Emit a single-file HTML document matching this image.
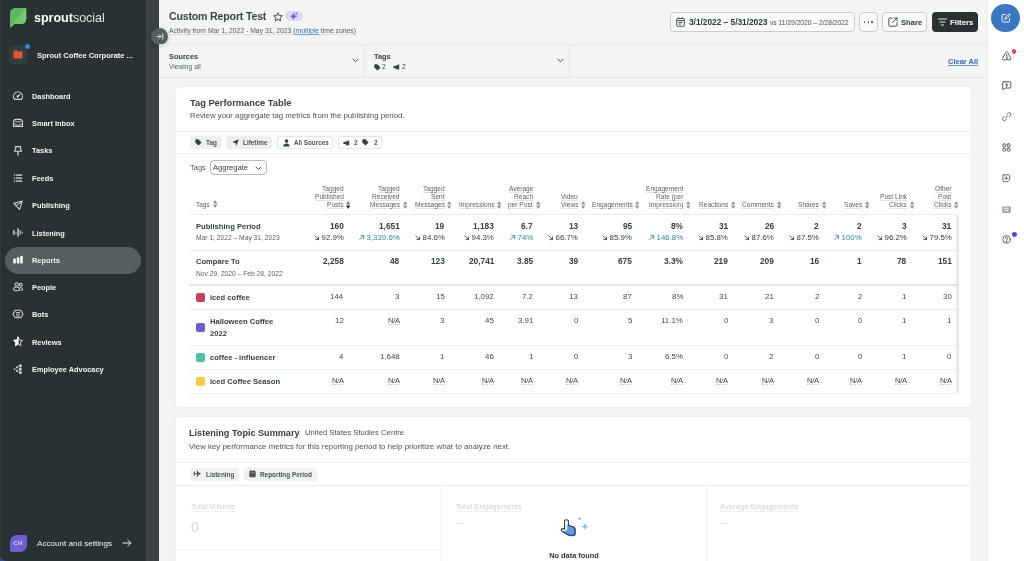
<!DOCTYPE html><html><head><meta charset="utf-8"><style>
html,body{margin:0;padding:0;}
body{width:1024px;height:561px;overflow:hidden;position:relative;background:#f3f4f4;font-family:"Liberation Sans",sans-serif;}
.t{position:absolute;white-space:nowrap;will-change:transform;}
svg{position:absolute;overflow:visible;}
</style></head><body><div style="position:absolute;left:988.3px;top:0px;width:35.7px;height:561px;background:#ffffff;box-shadow:-1px 0 2px rgba(0,0,0,0.035);"></div><div style="position:absolute;left:0px;top:0px;width:159px;height:561px;background:#394143;"></div><div style="position:absolute;left:0px;top:548px;width:12px;height:13px;background:#2b4f86;"></div><div style="position:absolute;left:0px;top:0px;width:146px;height:560.5px;background:#2a3133;border-bottom-left-radius:7px;box-shadow:inset 1px 0 0 #333a3c;"></div><svg style="left:10px;top:8px" width="17" height="20" viewBox="0 0 17 20">
<path d="M5.5 0 H16.2 V10.8 C16.2 13.8 14.2 15.9 11.2 15.9 H4.4 L0 19.8 V5.5 C0 2.3 2.3 0 5.5 0Z" fill="#5cb85f"/>
<path d="M16.2 0 V10.8 C16.2 13.8 14.2 15.9 11.2 15.9 H4.4 L0 19.8 Z" fill="#79cf6f"/>
<path d="M16.2 8 V10.8 C16.2 13.8 14.2 15.9 11.2 15.9 H4.4 L0 19.8 L7.8 8Z" fill="#6ec868" opacity="0.7"/>
</svg><div class="t" style="left:34.30px;top:10.99px;font-size:12.6px;line-height:14.49px;font-weight:400;color:#dfe3e3;letter-spacing:-0.05px;"><b style="color:#ffffff">sprout</b>social</div><div style="position:absolute;left:0px;top:40px;width:146px;height:1px;background:#2c3335;"></div><div style="position:absolute;left:9px;top:46px;width:18px;height:18px;background:#343c3e;border-radius:4px;"></div><svg style="left:13px;top:50px" width="10" height="9" viewBox="0 0 10 9"><path d="M0.5 1.2 C0.5 0.8 0.8 0.5 1.2 0.5 H3.8 L4.8 1.6 H8.8 C9.2 1.6 9.5 1.9 9.5 2.3 V8 C9.5 8.3 9.2 8.5 8.8 8.5 H1.2 C0.8 8.5 0.5 8.3 0.5 8Z" fill="#e0533f"/></svg><div style="position:absolute;left:24.5px;top:43.5px;width:5px;height:5px;background:#3b82dd;border-radius:50%;box-shadow:0 0 0 1px #2a3133;"></div><div class="t" style="left:37.00px;top:52.14px;font-size:7.5px;line-height:8.62px;font-weight:700;color:#f2f4f4;">Sprout Coffee Corporate ...</div><div style="position:absolute;left:4.5px;top:246.5px;width:136.5px;height:27px;background:#575e60;border-radius:14px;"></div><div class="t" style="left:31.75px;top:92.63px;font-size:7.4px;line-height:8.51px;font-weight:700;color:#f2f4f4;">Dashboard</div><div class="t" style="left:31.75px;top:120.38px;font-size:7.4px;line-height:8.51px;font-weight:700;color:#f2f4f4;">Smart Inbox</div><div class="t" style="left:31.75px;top:147.13px;font-size:7.4px;line-height:8.51px;font-weight:700;color:#f2f4f4;">Tasks</div><div class="t" style="left:31.75px;top:174.63px;font-size:7.4px;line-height:8.51px;font-weight:700;color:#f2f4f4;">Feeds</div><div class="t" style="left:31.75px;top:202.13px;font-size:7.4px;line-height:8.51px;font-weight:700;color:#f2f4f4;">Publishing</div><div class="t" style="left:31.75px;top:229.63px;font-size:7.4px;line-height:8.51px;font-weight:700;color:#f2f4f4;">Listening</div><div class="t" style="left:31.75px;top:256.88px;font-size:7.4px;line-height:8.51px;font-weight:700;color:#f2f4f4;">Reports</div><div class="t" style="left:31.75px;top:283.88px;font-size:7.4px;line-height:8.51px;font-weight:700;color:#f2f4f4;">People</div><div class="t" style="left:31.75px;top:311.13px;font-size:7.4px;line-height:8.51px;font-weight:700;color:#f2f4f4;">Bots</div><div class="t" style="left:31.75px;top:338.63px;font-size:7.4px;line-height:8.51px;font-weight:700;color:#f2f4f4;">Reviews</div><div class="t" style="left:31.75px;top:366.13px;font-size:7.4px;line-height:8.51px;font-weight:700;color:#f2f4f4;">Employee Advocacy</div><svg style="left:0px;top:0px" width="30" height="400" viewBox="0 0 30 400" fill="none" stroke="#cdd2d2" stroke-width="1.1" stroke-linecap="round" stroke-linejoin="round">
<path d="M14.6 99.4 A4.5 4.5 0 1 1 21.4 99.4 Z"/>
<circle cx="17.8" cy="96.4" r="1.2" fill="#cdd2d2" stroke="none"/>
<path d="M17.8 96.4 L19.8 94.4" stroke-width="1.3"/>
<path d="M13.5 126.4 V122.2 C13.5 120.6 14.8 119.4 16.4 119.4 H19.6 C21.2 119.4 22.5 120.6 22.5 122.2 V126.4 Z"/>
<path d="M15.6 121.8 H20.4 M13.5 124.2 H15.8 L17 125.3 H19 L20.2 124.2 H22.5" stroke-width="0.9"/>
<path d="M15.3 146.6 H20.8 L20.2 148.5 L21.7 151.3 H14.4 L15.9 148.5 Z"/>
<path d="M18 151.5 V155" stroke-width="1.4"/>
<path d="M13.8 203.4 L22.2 201 L19.6 209.4 Z"/>
<path d="M15.8 205.8 L20.8 202.6" stroke-width="1"/>
<path d="M16.5 210 L16.5 205.5" stroke="none"/>
<path d="M18.15 337.20 L19.50 340.04 L22.62 340.45 L20.34 342.61 L20.91 345.70 L18.15 344.20 L15.39 345.70 L15.96 342.61 L13.68 340.45 L16.80 340.04Z" stroke-width="1"/>
<path d="M18.15 337.20 L18.15 344.20 L15.39 345.70 L15.96 342.61 L13.68 340.45 L16.80 340.04Z" fill="#eef1f1" stroke="#eef1f1" stroke-width="1"/>
</svg><svg style="left:0px;top:0px" width="30" height="400" viewBox="0 0 30 400" fill="#a9afaf">
<rect x="13.8" y="174.2" width="1.4" height="1.7" rx="0.3"/><rect x="15.9" y="174.2" width="6.4" height="1.7" rx="0.3"/>
<rect x="13.8" y="177.2" width="1.4" height="1.7" rx="0.3"/><rect x="15.9" y="177.2" width="6.4" height="1.7" rx="0.3"/>
<rect x="13.8" y="180.2" width="1.4" height="1.7" rx="0.3"/><rect x="15.9" y="180.2" width="6.4" height="1.7" rx="0.3"/>
<rect x="13" y="230" width="1.8" height="5" rx="0.5"/><rect x="14.8" y="232.6" width="2.3" height="0.9"/>
<rect x="17.1" y="228" width="1.8" height="8.7" rx="0.5"/><rect x="19.6" y="230" width="1.3" height="5" rx="0.5"/>
<rect x="21.6" y="231.5" width="1.3" height="2" rx="0.5"/>
</svg><svg style="left:0px;top:0px" width="30" height="400" viewBox="0 0 30 400" fill="none" stroke="#cdd2d2" stroke-width="1.05" stroke-linecap="round" stroke-linejoin="round">
<circle cx="16.6" cy="284.4" r="1.7"/>
<path d="M13.6 289.6 C13.6 287.6 14.8 286.9 16.6 286.9 C18.4 286.9 19.6 287.6 19.6 289.6 C19.6 290.4 18.4 290.8 16.6 290.8 C14.8 290.8 13.6 290.4 13.6 289.6Z"/>
<circle cx="20.8" cy="284.7" r="1.4"/>
<path d="M20.6 287.4 C21.9 287.6 22.6 288.3 22.6 289.4 C22.6 290 22 290.3 21 290.3"/>
<path d="M15.2 310.2 H20.8 L23 314 L20.8 317.8 H15.2 L13 314 Z"/>
<path d="M16.4 312.5 H19.6 M16.4 314.3 H19.6 M16.4 316.1 H19.6" stroke-width="0.9"/>
</svg><svg style="left:0px;top:0px" width="30" height="400" viewBox="0 0 30 400" fill="#cdd2d2">
<circle cx="20.3" cy="365.7" r="1.55"/><circle cx="20.3" cy="369.1" r="1.55"/><circle cx="20.3" cy="372.5" r="1.55"/>
<circle cx="17.1" cy="367.3" r="1.15"/><circle cx="17.1" cy="370.9" r="1.15"/><circle cx="14.6" cy="369.1" r="0.95"/>
</svg><svg style="left:0px;top:0px" width="30" height="400" viewBox="0 0 30 400" fill="#f6f8f8"><rect x="13.2" y="258.6" width="2.6" height="5" rx="0.9"/><rect x="16.8" y="257.3" width="2.6" height="6.3" rx="0.9"/><rect x="20.2" y="255.8" width="2.6" height="7.8" rx="0.9"/></svg><div style="position:absolute;left:9.5px;top:535px;width:17.5px;height:17px;background:#6f5fd3;border-radius:7px 2px 7px 2px;"></div><div class="t" style="left:-281.70px;width:600px;text-align:center;top:539.44px;font-size:6.2px;line-height:7.13px;font-weight:700;color:#d6d0f7;letter-spacing:0.3px;">CH</div><div class="t" style="left:37.20px;top:538.69px;font-size:8.1px;line-height:9.31px;font-weight:400;color:#f2f4f4;">Account and settings</div><svg style="left:122px;top:539px" width="10" height="8" viewBox="0 0 10 8" fill="none" stroke="#f2f4f4" stroke-width="1" stroke-linecap="round" stroke-linejoin="round"><path d="M1 4 H8.8 M5.8 1 L8.8 4 L5.8 7"/></svg><div style="position:absolute;left:150.9px;top:28.4px;width:17px;height:17px;border-radius:50%;background:#576062;box-shadow:0 1px 4px rgba(0,0,0,0.25);"></div><svg style="left:155.6px;top:33.4px" width="8" height="7" viewBox="0 0 8 7" fill="none" stroke="#e8ebeb" stroke-width="0.9" stroke-linecap="round"><path d="M0.8 3.5 H5 M3.2 1.7 L5 3.5 L3.2 5.3 M6.8 0.8 V6.2"/></svg><div class="t" style="left:169.00px;top:10.23px;font-size:10.6px;line-height:12.19px;font-weight:700;color:#3b4444;letter-spacing:-0.18px;">Custom Report Test</div><svg style="left:272.5px;top:11.5px" width="10" height="10" viewBox="0 0 10 10" fill="none" stroke="#364141" stroke-width="0.9" stroke-linejoin="round"><path d="M5 0.7 L6.2 3.5 L9.3 3.8 L7 5.8 L7.7 8.9 L5 7.3 L2.3 8.9 L3 5.8 L0.7 3.8 L3.8 3.5Z"/></svg><div style="position:absolute;left:285.3px;top:11.1px;width:17.6px;height:9.6px;background:#dcd8f6;border-radius:5px;"></div><svg style="left:289px;top:11px" width="10" height="10" viewBox="0 0 10 10" fill="#6a5ad0"><path d="M4.5 2.2 C4.9 4 5.2 4.6 7.5 5.3 C5.2 6 4.9 6.6 4.5 8.4 C4.1 6.6 3.8 6 1.5 5.3 C3.8 4.6 4.1 4 4.5 2.2Z" stroke="#6a5ad0" stroke-width="0.7" stroke-linejoin="round"/><circle cx="7.5" cy="2.4" r="1"/></svg><div class="t" style="left:169.00px;top:26.68px;font-size:6.8px;line-height:7.82px;font-weight:400;color:#555d5f;"><span style="display:inline-block;line-height:7.4px;border-bottom:0.6px solid #dde1e1;">Activity from Mar 1, 2022 - May 31, 2023 (<span style="color:#3f70b5;text-decoration:underline;text-decoration-thickness:0.6px;text-decoration-color:#7a9bd0;">multiple</span> time zones)</span></div><div style="position:absolute;left:670.3px;top:12.2px;width:184.3px;height:19.5px;background:#f8f9f9;border:1px solid #c9cece;border-radius:4px;box-sizing:border-box;"></div><svg style="left:675.5px;top:17px" width="9" height="10" viewBox="0 0 9 10" fill="none" stroke="#364141" stroke-width="0.9"><rect x="0.7" y="1.5" width="7.6" height="7.8" rx="1"/><path d="M0.7 3.6 H8.3 M2.5 0.4 V2 M6.5 0.4 V2 M2.5 5.3 H6.5 M2.5 7.1 H5"/></svg><div class="t" style="left:689.00px;top:18.10px;font-size:8.3px;line-height:9.54px;font-weight:700;color:#2f3838;">3/1/2022 – 5/31/2023</div><div class="t" style="left:770.00px;top:19.38px;font-size:6.7px;line-height:7.70px;font-weight:400;color:#4b5355;">vs 11/29/2020 – 2/28/2022</div><div style="position:absolute;left:859.2px;top:12.2px;width:18.6px;height:19.5px;background:#f8f9f9;border:1px solid #c9cece;border-radius:4px;box-sizing:border-box;"></div><div style="position:absolute;left:863.85px;top:21.35px;width:1.3px;height:1.3px;background:#4b5355;border-radius:50%;"></div><div style="position:absolute;left:867.5500000000001px;top:21.35px;width:1.3px;height:1.3px;background:#4b5355;border-radius:50%;"></div><div style="position:absolute;left:871.25px;top:21.35px;width:1.3px;height:1.3px;background:#4b5355;border-radius:50%;"></div><div style="position:absolute;left:882.3px;top:12.2px;width:45px;height:19.5px;background:#f8f9f9;border:1px solid #c9cece;border-radius:4px;box-sizing:border-box;"></div><svg style="left:888px;top:17px" width="10" height="10" viewBox="0 0 10 10" fill="none" stroke="#364141" stroke-width="0.9" stroke-linecap="round" stroke-linejoin="round"><path d="M4.2 1 H1.6 C1.1 1 0.8 1.3 0.8 1.8 V8.4 C0.8 8.9 1.1 9.2 1.6 9.2 H8.2 C8.7 9.2 9 8.9 9 8.4 V5.8"/><path d="M4.5 5.5 L9 1 M6.2 1 H9 V3.8"/></svg><div class="t" style="left:901.00px;top:19.15px;font-size:7.6px;line-height:8.74px;font-weight:700;color:#2f3838;">Share</div><div style="position:absolute;left:931.8px;top:12.2px;width:46.6px;height:19.5px;background:#2a3133;border-radius:4px;"></div><svg style="left:937.5px;top:18px" width="9" height="8" viewBox="0 0 9 8" fill="none" stroke="#ffffff" stroke-width="0.9" stroke-linecap="round"><path d="M0.6 1 H8.4 M2 4 H7 M3.4 7 H5.6"/></svg><div class="t" style="left:950.00px;top:18.96px;font-size:7.8px;line-height:8.97px;font-weight:700;color:#ffffff;">Filters</div><div style="position:absolute;left:159px;top:44px;width:829px;height:1px;background:#e5e8e8;"></div><div style="position:absolute;left:159px;top:76.5px;width:829px;height:1px;background:#e3e6e6;"></div><div style="position:absolute;left:364px;top:45px;width:1px;height:31.5px;background:#e3e6e6;"></div><div style="position:absolute;left:568.5px;top:45px;width:1px;height:31.5px;background:#e3e6e6;"></div><div class="t" style="left:169.00px;top:52.83px;font-size:7.4px;line-height:8.51px;font-weight:700;color:#364141;">Sources</div><div class="t" style="left:169.00px;top:63.38px;font-size:6.7px;line-height:7.70px;font-weight:400;color:#5a6264;">Viewing all</div><svg style="left:352px;top:58px" width="7" height="5" viewBox="0 0 7 5" fill="none" stroke="#364141" stroke-width="0.9" stroke-linecap="round" stroke-linejoin="round"><path d="M1 1.2 L3.5 3.7 L6 1.2"/></svg><div class="t" style="left:373.90px;top:52.83px;font-size:7.4px;line-height:8.51px;font-weight:700;color:#364141;">Tags</div><svg style="left:373.5px;top:63.5px" width="7" height="7" viewBox="0 0 7 7" fill="#364141"><path d="M0.3 0.8 C0.3 0.5 0.5 0.3 0.8 0.3 H3.4 L6.6 3.5 L3.5 6.6 L0.3 3.4Z"/></svg><div class="t" style="left:381.50px;top:63.38px;font-size:6.7px;line-height:7.70px;font-weight:400;color:#364141;">2</div><svg style="left:392.5px;top:64px" width="8" height="6" viewBox="0 0 8 6" fill="#364141"><path d="M0.4 2 H2 L6.2 0.2 V5.8 L2 4 H0.4Z M2.2 4 L3 5.8 H3.8 L3.4 4.2Z"/></svg><div class="t" style="left:401.50px;top:63.38px;font-size:6.7px;line-height:7.70px;font-weight:400;color:#364141;">2</div><svg style="left:557px;top:58px" width="7" height="5" viewBox="0 0 7 5" fill="none" stroke="#364141" stroke-width="0.9" stroke-linecap="round" stroke-linejoin="round"><path d="M1 1.2 L3.5 3.7 L6 1.2"/></svg><div class="t" style="left:948.30px;top:58.44px;font-size:7.5px;line-height:8.62px;font-weight:700;color:#3669b3;text-decoration:underline;text-decoration-thickness:0.7px;text-decoration-color:#6d93c9;">Clear All</div><div style="position:absolute;left:175.6px;top:87px;width:795.5px;height:319.5px;background:#ffffff;border-radius:4px;box-shadow:0 0 0 0.5px #e8ebeb;"></div><div class="t" style="left:189.60px;top:98.03px;font-size:9.3px;line-height:10.70px;font-weight:700;color:#364141;">Tag Performance Table</div><div class="t" style="left:189.60px;top:112.16px;font-size:7.8px;line-height:8.97px;font-weight:400;color:#4b5355;">Review your aggregate tag metrics from the publishing period.</div><div style="position:absolute;left:176px;top:130.5px;width:795px;height:1px;background:#eceeee;"></div><div style="position:absolute;left:189.6px;top:136px;width:32px;height:12.6px;background:#eef0f0;border-radius:3px;"></div><div style="position:absolute;left:226.4px;top:136px;width:46px;height:12.6px;background:#eef0f0;border-radius:3px;"></div><div style="position:absolute;left:277.2px;top:136px;width:56.3px;height:12.6px;background:#fff;border:1px solid #e3e6e6;border-radius:3px;box-sizing:border-box;"></div><div style="position:absolute;left:338.4px;top:136px;width:44px;height:12.6px;background:#fff;border:1px solid #e3e6e6;border-radius:3px;box-sizing:border-box;"></div><svg style="left:195px;top:138.8px" width="7" height="7" viewBox="0 0 7 7" fill="#364141"><path d="M0.3 0.8 C0.3 0.5 0.5 0.3 0.8 0.3 H3.4 L6.6 3.5 L3.5 6.6 L0.3 3.4Z"/></svg><div class="t" style="left:205.50px;top:139.35px;font-size:6.4px;line-height:7.36px;font-weight:700;color:#4b5355;">Tag</div><svg style="left:231.5px;top:138.8px" width="7" height="7" viewBox="0 0 7 7" fill="#364141"><path d="M0.3 3 L6.7 0.3 L4.6 6.7 L3.3 4 Z"/></svg><div class="t" style="left:242.80px;top:139.35px;font-size:6.4px;line-height:7.36px;font-weight:700;color:#4b5355;">Lifetime</div><svg style="left:283px;top:138.5px" width="7" height="8" viewBox="0 0 7 8" fill="#364141"><circle cx="3.5" cy="2.1" r="1.8"/><path d="M0.3 7.6 C0.3 5.6 1.6 4.6 3.5 4.6 C5.4 4.6 6.7 5.6 6.7 7.6Z"/></svg><div class="t" style="left:293.60px;top:139.44px;font-size:6.3px;line-height:7.24px;font-weight:700;color:#4b5355;">All Sources</div><svg style="left:343px;top:139.5px" width="8" height="6" viewBox="0 0 8 6" fill="#364141"><path d="M0.4 2 H2 L6.2 0.2 V5.8 L2 4 H0.4Z M2.2 4 L3 5.8 H3.8 L3.4 4.2Z"/></svg><div class="t" style="left:353.50px;top:139.35px;font-size:6.4px;line-height:7.36px;font-weight:700;color:#4b5355;">2</div><svg style="left:362px;top:138.8px" width="7" height="7" viewBox="0 0 7 7" fill="#364141"><path d="M0.3 0.8 C0.3 0.5 0.5 0.3 0.8 0.3 H3.4 L6.6 3.5 L3.5 6.6 L0.3 3.4Z"/></svg><div class="t" style="left:373.50px;top:139.35px;font-size:6.4px;line-height:7.36px;font-weight:700;color:#4b5355;">2</div><div style="position:absolute;left:176px;top:153px;width:795px;height:1px;background:#eceeee;"></div><div class="t" style="left:189.60px;top:163.64px;font-size:7.5px;line-height:8.62px;font-weight:400;color:#4b5355;">Tags</div><div style="position:absolute;left:210.2px;top:160.2px;width:56.5px;height:14.5px;background:#fff;border:1px solid #b5bcbc;border-radius:4px;box-sizing:border-box;"></div><div class="t" style="left:213.00px;top:163.55px;font-size:7.6px;line-height:8.74px;font-weight:400;color:#364141;">Aggregate</div><svg style="left:255px;top:165.5px" width="7" height="5" viewBox="0 0 7 5" fill="none" stroke="#364141" stroke-width="0.9" stroke-linecap="round" stroke-linejoin="round"><path d="M1 1 L3.5 3.5 L6 1"/></svg><div class="t" style="right:680.50px;top:185.37px;font-size:6.6px;line-height:7.59px;font-weight:400;color:#5a6264;"><span style="border-bottom:0.8px solid #dfe3e3;">Tagged</span></div><div class="t" style="right:680.50px;top:193.27px;font-size:6.6px;line-height:7.59px;font-weight:400;color:#5a6264;"><span style="border-bottom:0.8px solid #dfe3e3;">Published</span></div><div class="t" style="right:680.50px;top:201.27px;font-size:6.6px;line-height:7.59px;font-weight:400;color:#5a6264;"><span style="border-bottom:0.8px solid #dfe3e3;">Posts</span></div><svg style="left:346.30px;top:200.60px" width="4.4" height="8" viewBox="0 0 4.4 8"><path d="M2.2 0.3 C2.3 0.3 2.4 0.35 2.5 0.5 L4.1 3 C4.2 3.2 4.1 3.4 3.9 3.4 H0.5 C0.3 3.4 0.2 3.2 0.3 3 L1.9 0.5 C2 0.35 2.1 0.3 2.2 0.3Z" fill="#6f7777"/><path d="M2.2 7.7 C2.3 7.7 2.4 7.65 2.5 7.5 L4.1 5 C4.2 4.8 4.1 4.6 3.9 4.6 H0.5 C0.3 4.6 0.2 4.8 0.3 5 L1.9 7.5 C2 7.65 2.1 7.7 2.2 7.7Z" fill="#1f2626"/></svg><div class="t" style="right:624.30px;top:185.37px;font-size:6.6px;line-height:7.59px;font-weight:400;color:#5a6264;"><span style="border-bottom:0.8px solid #dfe3e3;">Tagged</span></div><div class="t" style="right:624.30px;top:193.27px;font-size:6.6px;line-height:7.59px;font-weight:400;color:#5a6264;"><span style="border-bottom:0.8px solid #dfe3e3;">Received</span></div><div class="t" style="right:624.30px;top:201.27px;font-size:6.6px;line-height:7.59px;font-weight:400;color:#5a6264;"><span style="border-bottom:0.8px solid #dfe3e3;">Messages</span></div><svg style="left:402.50px;top:200.60px" width="4.4" height="8" viewBox="0 0 4.4 8"><path d="M2.2 0.3 C2.3 0.3 2.4 0.35 2.5 0.5 L4.1 3 C4.2 3.2 4.1 3.4 3.9 3.4 H0.5 C0.3 3.4 0.2 3.2 0.3 3 L1.9 0.5 C2 0.35 2.1 0.3 2.2 0.3Z" fill="#8f9797"/><path d="M2.2 7.7 C2.3 7.7 2.4 7.65 2.5 7.5 L4.1 5 C4.2 4.8 4.1 4.6 3.9 4.6 H0.5 C0.3 4.6 0.2 4.8 0.3 5 L1.9 7.5 C2 7.65 2.1 7.7 2.2 7.7Z" fill="#8f9797"/></svg><div class="t" style="right:579.40px;top:185.37px;font-size:6.6px;line-height:7.59px;font-weight:400;color:#5a6264;"><span style="border-bottom:0.8px solid #dfe3e3;">Tagged</span></div><div class="t" style="right:579.40px;top:193.27px;font-size:6.6px;line-height:7.59px;font-weight:400;color:#5a6264;"><span style="border-bottom:0.8px solid #dfe3e3;">Sent</span></div><div class="t" style="right:579.40px;top:201.27px;font-size:6.6px;line-height:7.59px;font-weight:400;color:#5a6264;"><span style="border-bottom:0.8px solid #dfe3e3;">Messages</span></div><svg style="left:447.40px;top:200.60px" width="4.4" height="8" viewBox="0 0 4.4 8"><path d="M2.2 0.3 C2.3 0.3 2.4 0.35 2.5 0.5 L4.1 3 C4.2 3.2 4.1 3.4 3.9 3.4 H0.5 C0.3 3.4 0.2 3.2 0.3 3 L1.9 0.5 C2 0.35 2.1 0.3 2.2 0.3Z" fill="#8f9797"/><path d="M2.2 7.7 C2.3 7.7 2.4 7.65 2.5 7.5 L4.1 5 C4.2 4.8 4.1 4.6 3.9 4.6 H0.5 C0.3 4.6 0.2 4.8 0.3 5 L1.9 7.5 C2 7.65 2.1 7.7 2.2 7.7Z" fill="#8f9797"/></svg><div class="t" style="right:529.90px;top:201.27px;font-size:6.6px;line-height:7.59px;font-weight:400;color:#5a6264;"><span style="border-bottom:0.8px solid #dfe3e3;">Impressions</span></div><svg style="left:496.90px;top:200.60px" width="4.4" height="8" viewBox="0 0 4.4 8"><path d="M2.2 0.3 C2.3 0.3 2.4 0.35 2.5 0.5 L4.1 3 C4.2 3.2 4.1 3.4 3.9 3.4 H0.5 C0.3 3.4 0.2 3.2 0.3 3 L1.9 0.5 C2 0.35 2.1 0.3 2.2 0.3Z" fill="#8f9797"/><path d="M2.2 7.7 C2.3 7.7 2.4 7.65 2.5 7.5 L4.1 5 C4.2 4.8 4.1 4.6 3.9 4.6 H0.5 C0.3 4.6 0.2 4.8 0.3 5 L1.9 7.5 C2 7.65 2.1 7.7 2.2 7.7Z" fill="#8f9797"/></svg><div class="t" style="right:491.00px;top:185.37px;font-size:6.6px;line-height:7.59px;font-weight:400;color:#5a6264;"><span style="border-bottom:0.8px solid #dfe3e3;">Average</span></div><div class="t" style="right:491.00px;top:193.27px;font-size:6.6px;line-height:7.59px;font-weight:400;color:#5a6264;"><span style="border-bottom:0.8px solid #dfe3e3;">Reach</span></div><div class="t" style="right:491.00px;top:201.27px;font-size:6.6px;line-height:7.59px;font-weight:400;color:#5a6264;"><span style="border-bottom:0.8px solid #dfe3e3;">per Post</span></div><svg style="left:535.80px;top:200.60px" width="4.4" height="8" viewBox="0 0 4.4 8"><path d="M2.2 0.3 C2.3 0.3 2.4 0.35 2.5 0.5 L4.1 3 C4.2 3.2 4.1 3.4 3.9 3.4 H0.5 C0.3 3.4 0.2 3.2 0.3 3 L1.9 0.5 C2 0.35 2.1 0.3 2.2 0.3Z" fill="#8f9797"/><path d="M2.2 7.7 C2.3 7.7 2.4 7.65 2.5 7.5 L4.1 5 C4.2 4.8 4.1 4.6 3.9 4.6 H0.5 C0.3 4.6 0.2 4.8 0.3 5 L1.9 7.5 C2 7.65 2.1 7.7 2.2 7.7Z" fill="#8f9797"/></svg><div class="t" style="right:446.00px;top:193.27px;font-size:6.6px;line-height:7.59px;font-weight:400;color:#5a6264;"><span style="border-bottom:0.8px solid #dfe3e3;">Video</span></div><div class="t" style="right:446.00px;top:201.27px;font-size:6.6px;line-height:7.59px;font-weight:400;color:#5a6264;"><span style="border-bottom:0.8px solid #dfe3e3;">Views</span></div><svg style="left:580.80px;top:200.60px" width="4.4" height="8" viewBox="0 0 4.4 8"><path d="M2.2 0.3 C2.3 0.3 2.4 0.35 2.5 0.5 L4.1 3 C4.2 3.2 4.1 3.4 3.9 3.4 H0.5 C0.3 3.4 0.2 3.2 0.3 3 L1.9 0.5 C2 0.35 2.1 0.3 2.2 0.3Z" fill="#8f9797"/><path d="M2.2 7.7 C2.3 7.7 2.4 7.65 2.5 7.5 L4.1 5 C4.2 4.8 4.1 4.6 3.9 4.6 H0.5 C0.3 4.6 0.2 4.8 0.3 5 L1.9 7.5 C2 7.65 2.1 7.7 2.2 7.7Z" fill="#8f9797"/></svg><div class="t" style="right:391.80px;top:201.27px;font-size:6.6px;line-height:7.59px;font-weight:400;color:#5a6264;"><span style="border-bottom:0.8px solid #dfe3e3;">Engagements</span></div><svg style="left:635.00px;top:200.60px" width="4.4" height="8" viewBox="0 0 4.4 8"><path d="M2.2 0.3 C2.3 0.3 2.4 0.35 2.5 0.5 L4.1 3 C4.2 3.2 4.1 3.4 3.9 3.4 H0.5 C0.3 3.4 0.2 3.2 0.3 3 L1.9 0.5 C2 0.35 2.1 0.3 2.2 0.3Z" fill="#8f9797"/><path d="M2.2 7.7 C2.3 7.7 2.4 7.65 2.5 7.5 L4.1 5 C4.2 4.8 4.1 4.6 3.9 4.6 H0.5 C0.3 4.6 0.2 4.8 0.3 5 L1.9 7.5 C2 7.65 2.1 7.7 2.2 7.7Z" fill="#8f9797"/></svg><div class="t" style="right:341.00px;top:185.37px;font-size:6.6px;line-height:7.59px;font-weight:400;color:#5a6264;"><span style="border-bottom:0.8px solid #dfe3e3;">Engagement</span></div><div class="t" style="right:341.00px;top:193.27px;font-size:6.6px;line-height:7.59px;font-weight:400;color:#5a6264;"><span style="border-bottom:0.8px solid #dfe3e3;">Rate (per</span></div><div class="t" style="right:341.00px;top:201.27px;font-size:6.6px;line-height:7.59px;font-weight:400;color:#5a6264;"><span style="border-bottom:0.8px solid #dfe3e3;">Impression)</span></div><svg style="left:685.80px;top:200.60px" width="4.4" height="8" viewBox="0 0 4.4 8"><path d="M2.2 0.3 C2.3 0.3 2.4 0.35 2.5 0.5 L4.1 3 C4.2 3.2 4.1 3.4 3.9 3.4 H0.5 C0.3 3.4 0.2 3.2 0.3 3 L1.9 0.5 C2 0.35 2.1 0.3 2.2 0.3Z" fill="#8f9797"/><path d="M2.2 7.7 C2.3 7.7 2.4 7.65 2.5 7.5 L4.1 5 C4.2 4.8 4.1 4.6 3.9 4.6 H0.5 C0.3 4.6 0.2 4.8 0.3 5 L1.9 7.5 C2 7.65 2.1 7.7 2.2 7.7Z" fill="#8f9797"/></svg><div class="t" style="right:295.80px;top:201.27px;font-size:6.6px;line-height:7.59px;font-weight:400;color:#5a6264;"><span style="border-bottom:0.8px solid #dfe3e3;">Reactions</span></div><svg style="left:731.00px;top:200.60px" width="4.4" height="8" viewBox="0 0 4.4 8"><path d="M2.2 0.3 C2.3 0.3 2.4 0.35 2.5 0.5 L4.1 3 C4.2 3.2 4.1 3.4 3.9 3.4 H0.5 C0.3 3.4 0.2 3.2 0.3 3 L1.9 0.5 C2 0.35 2.1 0.3 2.2 0.3Z" fill="#8f9797"/><path d="M2.2 7.7 C2.3 7.7 2.4 7.65 2.5 7.5 L4.1 5 C4.2 4.8 4.1 4.6 3.9 4.6 H0.5 C0.3 4.6 0.2 4.8 0.3 5 L1.9 7.5 C2 7.65 2.1 7.7 2.2 7.7Z" fill="#8f9797"/></svg><div class="t" style="right:250.20px;top:201.27px;font-size:6.6px;line-height:7.59px;font-weight:400;color:#5a6264;"><span style="border-bottom:0.8px solid #dfe3e3;">Comments</span></div><svg style="left:776.60px;top:200.60px" width="4.4" height="8" viewBox="0 0 4.4 8"><path d="M2.2 0.3 C2.3 0.3 2.4 0.35 2.5 0.5 L4.1 3 C4.2 3.2 4.1 3.4 3.9 3.4 H0.5 C0.3 3.4 0.2 3.2 0.3 3 L1.9 0.5 C2 0.35 2.1 0.3 2.2 0.3Z" fill="#8f9797"/><path d="M2.2 7.7 C2.3 7.7 2.4 7.65 2.5 7.5 L4.1 5 C4.2 4.8 4.1 4.6 3.9 4.6 H0.5 C0.3 4.6 0.2 4.8 0.3 5 L1.9 7.5 C2 7.65 2.1 7.7 2.2 7.7Z" fill="#8f9797"/></svg><div class="t" style="right:205.00px;top:201.27px;font-size:6.6px;line-height:7.59px;font-weight:400;color:#5a6264;"><span style="border-bottom:0.8px solid #dfe3e3;">Shares</span></div><svg style="left:821.80px;top:200.60px" width="4.4" height="8" viewBox="0 0 4.4 8"><path d="M2.2 0.3 C2.3 0.3 2.4 0.35 2.5 0.5 L4.1 3 C4.2 3.2 4.1 3.4 3.9 3.4 H0.5 C0.3 3.4 0.2 3.2 0.3 3 L1.9 0.5 C2 0.35 2.1 0.3 2.2 0.3Z" fill="#8f9797"/><path d="M2.2 7.7 C2.3 7.7 2.4 7.65 2.5 7.5 L4.1 5 C4.2 4.8 4.1 4.6 3.9 4.6 H0.5 C0.3 4.6 0.2 4.8 0.3 5 L1.9 7.5 C2 7.65 2.1 7.7 2.2 7.7Z" fill="#8f9797"/></svg><div class="t" style="right:162.10px;top:201.27px;font-size:6.6px;line-height:7.59px;font-weight:400;color:#5a6264;"><span style="border-bottom:0.8px solid #dfe3e3;">Saves</span></div><svg style="left:864.70px;top:200.60px" width="4.4" height="8" viewBox="0 0 4.4 8"><path d="M2.2 0.3 C2.3 0.3 2.4 0.35 2.5 0.5 L4.1 3 C4.2 3.2 4.1 3.4 3.9 3.4 H0.5 C0.3 3.4 0.2 3.2 0.3 3 L1.9 0.5 C2 0.35 2.1 0.3 2.2 0.3Z" fill="#8f9797"/><path d="M2.2 7.7 C2.3 7.7 2.4 7.65 2.5 7.5 L4.1 5 C4.2 4.8 4.1 4.6 3.9 4.6 H0.5 C0.3 4.6 0.2 4.8 0.3 5 L1.9 7.5 C2 7.65 2.1 7.7 2.2 7.7Z" fill="#8f9797"/></svg><div class="t" style="right:117.30px;top:193.27px;font-size:6.6px;line-height:7.59px;font-weight:400;color:#5a6264;"><span style="border-bottom:0.8px solid #dfe3e3;">Post Link</span></div><div class="t" style="right:117.30px;top:201.27px;font-size:6.6px;line-height:7.59px;font-weight:400;color:#5a6264;"><span style="border-bottom:0.8px solid #dfe3e3;">Clicks</span></div><svg style="left:909.50px;top:200.60px" width="4.4" height="8" viewBox="0 0 4.4 8"><path d="M2.2 0.3 C2.3 0.3 2.4 0.35 2.5 0.5 L4.1 3 C4.2 3.2 4.1 3.4 3.9 3.4 H0.5 C0.3 3.4 0.2 3.2 0.3 3 L1.9 0.5 C2 0.35 2.1 0.3 2.2 0.3Z" fill="#8f9797"/><path d="M2.2 7.7 C2.3 7.7 2.4 7.65 2.5 7.5 L4.1 5 C4.2 4.8 4.1 4.6 3.9 4.6 H0.5 C0.3 4.6 0.2 4.8 0.3 5 L1.9 7.5 C2 7.65 2.1 7.7 2.2 7.7Z" fill="#8f9797"/></svg><div class="t" style="right:72.40px;top:185.37px;font-size:6.6px;line-height:7.59px;font-weight:400;color:#5a6264;"><span style="border-bottom:0.8px solid #dfe3e3;">Other</span></div><div class="t" style="right:72.40px;top:193.27px;font-size:6.6px;line-height:7.59px;font-weight:400;color:#5a6264;"><span style="border-bottom:0.8px solid #dfe3e3;">Post</span></div><div class="t" style="right:72.40px;top:201.27px;font-size:6.6px;line-height:7.59px;font-weight:400;color:#5a6264;"><span style="border-bottom:0.8px solid #dfe3e3;">Clicks</span></div><svg style="left:954.40px;top:200.60px" width="4.4" height="8" viewBox="0 0 4.4 8"><path d="M2.2 0.3 C2.3 0.3 2.4 0.35 2.5 0.5 L4.1 3 C4.2 3.2 4.1 3.4 3.9 3.4 H0.5 C0.3 3.4 0.2 3.2 0.3 3 L1.9 0.5 C2 0.35 2.1 0.3 2.2 0.3Z" fill="#8f9797"/><path d="M2.2 7.7 C2.3 7.7 2.4 7.65 2.5 7.5 L4.1 5 C4.2 4.8 4.1 4.6 3.9 4.6 H0.5 C0.3 4.6 0.2 4.8 0.3 5 L1.9 7.5 C2 7.65 2.1 7.7 2.2 7.7Z" fill="#8f9797"/></svg><div class="t" style="left:196.30px;top:201.45px;font-size:6.4px;line-height:7.36px;font-weight:400;color:#5a6264;">Tags</div><svg style="left:213.00px;top:200.40px" width="4.4" height="8" viewBox="0 0 4.4 8"><path d="M2.2 0.3 C2.3 0.3 2.4 0.35 2.5 0.5 L4.1 3 C4.2 3.2 4.1 3.4 3.9 3.4 H0.5 C0.3 3.4 0.2 3.2 0.3 3 L1.9 0.5 C2 0.35 2.1 0.3 2.2 0.3Z" fill="#8f9797"/><path d="M2.2 7.7 C2.3 7.7 2.4 7.65 2.5 7.5 L4.1 5 C4.2 4.8 4.1 4.6 3.9 4.6 H0.5 C0.3 4.6 0.2 4.8 0.3 5 L1.9 7.5 C2 7.65 2.1 7.7 2.2 7.7Z" fill="#8f9797"/></svg><div style="position:absolute;left:189.5px;top:214px;width:768.5px;height:1px;background:#eceeee;"></div><div style="position:absolute;left:189.5px;top:250px;width:768.5px;height:1px;background:#eceeee;"></div><div style="position:absolute;left:189.5px;top:309px;width:768.5px;height:1px;background:#eceeee;"></div><div style="position:absolute;left:189.5px;top:345px;width:768.5px;height:1px;background:#eceeee;"></div><div style="position:absolute;left:189.5px;top:368.8px;width:768.5px;height:1px;background:#eceeee;"></div><div style="position:absolute;left:189.5px;top:392.6px;width:768.5px;height:1px;background:#eceeee;"></div><div style="position:absolute;left:189.5px;top:284px;width:768.5px;height:1.6px;background:#e1e5e5;"></div><div style="position:absolute;left:953.5px;top:214.5px;width:5px;height:178.5px;background:linear-gradient(to right, rgba(0,0,0,0), rgba(0,0,0,0.05) 50%, rgba(0,0,0,0.13));"></div><div class="t" style="left:196.10px;top:222.55px;font-size:7.6px;line-height:8.74px;font-weight:700;color:#364141;">Publishing Period</div><div class="t" style="left:196.10px;top:234.38px;font-size:6.7px;line-height:7.70px;font-weight:400;color:#5a6264;">Mar 1, 2022 – May 31, 2023</div><div class="t" style="left:196.10px;top:258.25px;font-size:7.6px;line-height:8.74px;font-weight:700;color:#364141;">Compare To</div><div class="t" style="left:196.10px;top:270.38px;font-size:6.7px;line-height:7.70px;font-weight:400;color:#5a6264;">Nov 29, 2020 – Feb 28, 2022</div><div class="t" style="right:680.50px;top:221.90px;font-size:8.3px;line-height:9.54px;font-weight:700;color:#364141;">160</div><div class="t" style="right:624.30px;top:221.90px;font-size:8.3px;line-height:9.54px;font-weight:700;color:#364141;">1,651</div><div class="t" style="right:579.40px;top:221.90px;font-size:8.3px;line-height:9.54px;font-weight:700;color:#364141;">19</div><div class="t" style="right:529.90px;top:221.90px;font-size:8.3px;line-height:9.54px;font-weight:700;color:#364141;">1,183</div><div class="t" style="right:491.00px;top:221.90px;font-size:8.3px;line-height:9.54px;font-weight:700;color:#364141;">6.7</div><div class="t" style="right:446.00px;top:221.90px;font-size:8.3px;line-height:9.54px;font-weight:700;color:#364141;">13</div><div class="t" style="right:391.80px;top:221.90px;font-size:8.3px;line-height:9.54px;font-weight:700;color:#364141;">95</div><div class="t" style="right:341.00px;top:221.90px;font-size:8.3px;line-height:9.54px;font-weight:700;color:#364141;">8%</div><div class="t" style="right:295.80px;top:221.90px;font-size:8.3px;line-height:9.54px;font-weight:700;color:#364141;">31</div><div class="t" style="right:250.20px;top:221.90px;font-size:8.3px;line-height:9.54px;font-weight:700;color:#364141;">26</div><div class="t" style="right:205.00px;top:221.90px;font-size:8.3px;line-height:9.54px;font-weight:700;color:#364141;">2</div><div class="t" style="right:162.10px;top:221.90px;font-size:8.3px;line-height:9.54px;font-weight:700;color:#364141;">2</div><div class="t" style="right:117.30px;top:221.90px;font-size:8.3px;line-height:9.54px;font-weight:700;color:#364141;">3</div><div class="t" style="right:72.40px;top:221.90px;font-size:8.3px;line-height:9.54px;font-weight:700;color:#364141;">31</div><div class="t" style="right:680.50px;top:233.27px;font-size:7.9px;line-height:9.08px;font-weight:400;color:#364141;"><svg style="position:static;display:inline-block;vertical-align:0px;margin-right:2px" width="5.5" height="5.5" viewBox="0 0 6 6" fill="none" stroke="#364141" stroke-width="0.9" stroke-linecap="round" stroke-linejoin="round"><path d="M0.8 0.8 L5 5 M5 2 V5 H2"/></svg>92.9%</div><div class="t" style="right:624.30px;top:233.27px;font-size:7.9px;line-height:9.08px;font-weight:400;color:#2c8a8a;"><svg style="position:static;display:inline-block;vertical-align:0px;margin-right:2px" width="5.5" height="5.5" viewBox="0 0 6 6" fill="none" stroke="#2c8a8a" stroke-width="0.9" stroke-linecap="round" stroke-linejoin="round"><path d="M0.8 5 L5 0.8 M2 0.8 H5 V4"/></svg>3,339.6%</div><div class="t" style="right:579.40px;top:233.27px;font-size:7.9px;line-height:9.08px;font-weight:400;color:#364141;"><svg style="position:static;display:inline-block;vertical-align:0px;margin-right:2px" width="5.5" height="5.5" viewBox="0 0 6 6" fill="none" stroke="#364141" stroke-width="0.9" stroke-linecap="round" stroke-linejoin="round"><path d="M0.8 0.8 L5 5 M5 2 V5 H2"/></svg>84.6%</div><div class="t" style="right:529.90px;top:233.27px;font-size:7.9px;line-height:9.08px;font-weight:400;color:#364141;"><svg style="position:static;display:inline-block;vertical-align:0px;margin-right:2px" width="5.5" height="5.5" viewBox="0 0 6 6" fill="none" stroke="#364141" stroke-width="0.9" stroke-linecap="round" stroke-linejoin="round"><path d="M0.8 0.8 L5 5 M5 2 V5 H2"/></svg>94.3%</div><div class="t" style="right:491.00px;top:233.27px;font-size:7.9px;line-height:9.08px;font-weight:400;color:#2c8a8a;"><svg style="position:static;display:inline-block;vertical-align:0px;margin-right:2px" width="5.5" height="5.5" viewBox="0 0 6 6" fill="none" stroke="#2c8a8a" stroke-width="0.9" stroke-linecap="round" stroke-linejoin="round"><path d="M0.8 5 L5 0.8 M2 0.8 H5 V4"/></svg>74%</div><div class="t" style="right:446.00px;top:233.27px;font-size:7.9px;line-height:9.08px;font-weight:400;color:#364141;"><svg style="position:static;display:inline-block;vertical-align:0px;margin-right:2px" width="5.5" height="5.5" viewBox="0 0 6 6" fill="none" stroke="#364141" stroke-width="0.9" stroke-linecap="round" stroke-linejoin="round"><path d="M0.8 0.8 L5 5 M5 2 V5 H2"/></svg>66.7%</div><div class="t" style="right:391.80px;top:233.27px;font-size:7.9px;line-height:9.08px;font-weight:400;color:#364141;"><svg style="position:static;display:inline-block;vertical-align:0px;margin-right:2px" width="5.5" height="5.5" viewBox="0 0 6 6" fill="none" stroke="#364141" stroke-width="0.9" stroke-linecap="round" stroke-linejoin="round"><path d="M0.8 0.8 L5 5 M5 2 V5 H2"/></svg>85.9%</div><div class="t" style="right:341.00px;top:233.27px;font-size:7.9px;line-height:9.08px;font-weight:400;color:#2c8a8a;"><svg style="position:static;display:inline-block;vertical-align:0px;margin-right:2px" width="5.5" height="5.5" viewBox="0 0 6 6" fill="none" stroke="#2c8a8a" stroke-width="0.9" stroke-linecap="round" stroke-linejoin="round"><path d="M0.8 5 L5 0.8 M2 0.8 H5 V4"/></svg>146.8%</div><div class="t" style="right:295.80px;top:233.27px;font-size:7.9px;line-height:9.08px;font-weight:400;color:#364141;"><svg style="position:static;display:inline-block;vertical-align:0px;margin-right:2px" width="5.5" height="5.5" viewBox="0 0 6 6" fill="none" stroke="#364141" stroke-width="0.9" stroke-linecap="round" stroke-linejoin="round"><path d="M0.8 0.8 L5 5 M5 2 V5 H2"/></svg>85.8%</div><div class="t" style="right:250.20px;top:233.27px;font-size:7.9px;line-height:9.08px;font-weight:400;color:#364141;"><svg style="position:static;display:inline-block;vertical-align:0px;margin-right:2px" width="5.5" height="5.5" viewBox="0 0 6 6" fill="none" stroke="#364141" stroke-width="0.9" stroke-linecap="round" stroke-linejoin="round"><path d="M0.8 0.8 L5 5 M5 2 V5 H2"/></svg>87.6%</div><div class="t" style="right:205.00px;top:233.27px;font-size:7.9px;line-height:9.08px;font-weight:400;color:#364141;"><svg style="position:static;display:inline-block;vertical-align:0px;margin-right:2px" width="5.5" height="5.5" viewBox="0 0 6 6" fill="none" stroke="#364141" stroke-width="0.9" stroke-linecap="round" stroke-linejoin="round"><path d="M0.8 0.8 L5 5 M5 2 V5 H2"/></svg>87.5%</div><div class="t" style="right:162.10px;top:233.27px;font-size:7.9px;line-height:9.08px;font-weight:400;color:#2c8a8a;"><svg style="position:static;display:inline-block;vertical-align:0px;margin-right:2px" width="5.5" height="5.5" viewBox="0 0 6 6" fill="none" stroke="#2c8a8a" stroke-width="0.9" stroke-linecap="round" stroke-linejoin="round"><path d="M0.8 5 L5 0.8 M2 0.8 H5 V4"/></svg>100%</div><div class="t" style="right:117.30px;top:233.27px;font-size:7.9px;line-height:9.08px;font-weight:400;color:#364141;"><svg style="position:static;display:inline-block;vertical-align:0px;margin-right:2px" width="5.5" height="5.5" viewBox="0 0 6 6" fill="none" stroke="#364141" stroke-width="0.9" stroke-linecap="round" stroke-linejoin="round"><path d="M0.8 0.8 L5 5 M5 2 V5 H2"/></svg>96.2%</div><div class="t" style="right:72.40px;top:233.27px;font-size:7.9px;line-height:9.08px;font-weight:400;color:#364141;"><svg style="position:static;display:inline-block;vertical-align:0px;margin-right:2px" width="5.5" height="5.5" viewBox="0 0 6 6" fill="none" stroke="#364141" stroke-width="0.9" stroke-linecap="round" stroke-linejoin="round"><path d="M0.8 0.8 L5 5 M5 2 V5 H2"/></svg>79.5%</div><div class="t" style="right:680.50px;top:257.20px;font-size:8.3px;line-height:9.54px;font-weight:700;color:#364141;">2,258</div><div class="t" style="right:624.30px;top:257.20px;font-size:8.3px;line-height:9.54px;font-weight:700;color:#364141;">48</div><div class="t" style="right:579.40px;top:257.20px;font-size:8.3px;line-height:9.54px;font-weight:700;color:#364141;">123</div><div class="t" style="right:529.90px;top:257.20px;font-size:8.3px;line-height:9.54px;font-weight:700;color:#364141;">20,741</div><div class="t" style="right:491.00px;top:257.20px;font-size:8.3px;line-height:9.54px;font-weight:700;color:#364141;">3.85</div><div class="t" style="right:446.00px;top:257.20px;font-size:8.3px;line-height:9.54px;font-weight:700;color:#364141;">39</div><div class="t" style="right:391.80px;top:257.20px;font-size:8.3px;line-height:9.54px;font-weight:700;color:#364141;">675</div><div class="t" style="right:341.00px;top:257.20px;font-size:8.3px;line-height:9.54px;font-weight:700;color:#364141;">3.3%</div><div class="t" style="right:295.80px;top:257.20px;font-size:8.3px;line-height:9.54px;font-weight:700;color:#364141;">219</div><div class="t" style="right:250.20px;top:257.20px;font-size:8.3px;line-height:9.54px;font-weight:700;color:#364141;">209</div><div class="t" style="right:205.00px;top:257.20px;font-size:8.3px;line-height:9.54px;font-weight:700;color:#364141;">16</div><div class="t" style="right:162.10px;top:257.20px;font-size:8.3px;line-height:9.54px;font-weight:700;color:#364141;">1</div><div class="t" style="right:117.30px;top:257.20px;font-size:8.3px;line-height:9.54px;font-weight:700;color:#364141;">78</div><div class="t" style="right:72.40px;top:257.20px;font-size:8.3px;line-height:9.54px;font-weight:700;color:#364141;">151</div><div class="t" style="left:209.90px;top:293.95px;font-size:7.6px;line-height:8.74px;font-weight:700;color:#364141;">iced coffee</div><div style="position:absolute;left:196.2px;top:292.6px;width:9px;height:9px;background:#c8405f;border-radius:2px;"></div><div class="t" style="right:680.50px;top:291.87px;font-size:7.9px;line-height:9.08px;font-weight:400;color:#414a4b;">144</div><div class="t" style="right:624.30px;top:291.87px;font-size:7.9px;line-height:9.08px;font-weight:400;color:#414a4b;">3</div><div class="t" style="right:579.40px;top:291.87px;font-size:7.9px;line-height:9.08px;font-weight:400;color:#414a4b;">15</div><div class="t" style="right:529.90px;top:291.87px;font-size:7.9px;line-height:9.08px;font-weight:400;color:#414a4b;">1,092</div><div class="t" style="right:491.00px;top:291.87px;font-size:7.9px;line-height:9.08px;font-weight:400;color:#414a4b;">7.2</div><div class="t" style="right:446.00px;top:291.87px;font-size:7.9px;line-height:9.08px;font-weight:400;color:#414a4b;">13</div><div class="t" style="right:391.80px;top:291.87px;font-size:7.9px;line-height:9.08px;font-weight:400;color:#414a4b;">87</div><div class="t" style="right:341.00px;top:291.87px;font-size:7.9px;line-height:9.08px;font-weight:400;color:#414a4b;">8%</div><div class="t" style="right:295.80px;top:291.87px;font-size:7.9px;line-height:9.08px;font-weight:400;color:#414a4b;">31</div><div class="t" style="right:250.20px;top:291.87px;font-size:7.9px;line-height:9.08px;font-weight:400;color:#414a4b;">21</div><div class="t" style="right:205.00px;top:291.87px;font-size:7.9px;line-height:9.08px;font-weight:400;color:#414a4b;">2</div><div class="t" style="right:162.10px;top:291.87px;font-size:7.9px;line-height:9.08px;font-weight:400;color:#414a4b;">2</div><div class="t" style="right:117.30px;top:291.87px;font-size:7.9px;line-height:9.08px;font-weight:400;color:#414a4b;">1</div><div class="t" style="right:72.40px;top:291.87px;font-size:7.9px;line-height:9.08px;font-weight:400;color:#414a4b;">30</div><div class="t" style="left:209.90px;top:318.25px;font-size:7.6px;line-height:8.74px;font-weight:700;color:#364141;">Halloween Coffee</div><div class="t" style="left:209.90px;top:330.35px;font-size:7.6px;line-height:8.74px;font-weight:700;color:#364141;">2022</div><div style="position:absolute;left:196.2px;top:322.50000000000006px;width:9px;height:9px;background:#6c5bd6;border-radius:2px;"></div><div class="t" style="right:680.50px;top:316.17px;font-size:7.9px;line-height:9.08px;font-weight:400;color:#414a4b;">12</div><div class="t" style="right:624.30px;top:317.05px;font-size:7.6px;line-height:8.74px;font-weight:400;color:#414a4b;letter-spacing:-0.25px;"><span style="display:inline-block;line-height:6.2px;border-bottom:0.7px dotted #c5caca;">N/A</span></div><div class="t" style="right:579.40px;top:316.17px;font-size:7.9px;line-height:9.08px;font-weight:400;color:#414a4b;">3</div><div class="t" style="right:529.90px;top:316.17px;font-size:7.9px;line-height:9.08px;font-weight:400;color:#414a4b;">45</div><div class="t" style="right:491.00px;top:316.17px;font-size:7.9px;line-height:9.08px;font-weight:400;color:#414a4b;">3.91</div><div class="t" style="right:446.00px;top:316.17px;font-size:7.9px;line-height:9.08px;font-weight:400;color:#414a4b;">0</div><div class="t" style="right:391.80px;top:316.17px;font-size:7.9px;line-height:9.08px;font-weight:400;color:#414a4b;">5</div><div class="t" style="right:341.00px;top:316.17px;font-size:7.9px;line-height:9.08px;font-weight:400;color:#414a4b;">11.1%</div><div class="t" style="right:295.80px;top:316.17px;font-size:7.9px;line-height:9.08px;font-weight:400;color:#414a4b;">0</div><div class="t" style="right:250.20px;top:316.17px;font-size:7.9px;line-height:9.08px;font-weight:400;color:#414a4b;">3</div><div class="t" style="right:205.00px;top:316.17px;font-size:7.9px;line-height:9.08px;font-weight:400;color:#414a4b;">0</div><div class="t" style="right:162.10px;top:316.17px;font-size:7.9px;line-height:9.08px;font-weight:400;color:#414a4b;">0</div><div class="t" style="right:117.30px;top:316.17px;font-size:7.9px;line-height:9.08px;font-weight:400;color:#414a4b;">1</div><div class="t" style="right:72.40px;top:316.17px;font-size:7.9px;line-height:9.08px;font-weight:400;color:#414a4b;">1</div><div class="t" style="left:209.90px;top:354.35px;font-size:7.6px;line-height:8.74px;font-weight:700;color:#364141;">coffee - influencer</div><div style="position:absolute;left:196.2px;top:353.0px;width:9px;height:9px;background:#4fbfab;border-radius:2px;"></div><div class="t" style="right:680.50px;top:352.27px;font-size:7.9px;line-height:9.08px;font-weight:400;color:#414a4b;">4</div><div class="t" style="right:624.30px;top:352.27px;font-size:7.9px;line-height:9.08px;font-weight:400;color:#414a4b;">1,648</div><div class="t" style="right:579.40px;top:352.27px;font-size:7.9px;line-height:9.08px;font-weight:400;color:#414a4b;">1</div><div class="t" style="right:529.90px;top:352.27px;font-size:7.9px;line-height:9.08px;font-weight:400;color:#414a4b;">46</div><div class="t" style="right:491.00px;top:352.27px;font-size:7.9px;line-height:9.08px;font-weight:400;color:#414a4b;">1</div><div class="t" style="right:446.00px;top:352.27px;font-size:7.9px;line-height:9.08px;font-weight:400;color:#414a4b;">0</div><div class="t" style="right:391.80px;top:352.27px;font-size:7.9px;line-height:9.08px;font-weight:400;color:#414a4b;">3</div><div class="t" style="right:341.00px;top:352.27px;font-size:7.9px;line-height:9.08px;font-weight:400;color:#414a4b;">6.5%</div><div class="t" style="right:295.80px;top:352.27px;font-size:7.9px;line-height:9.08px;font-weight:400;color:#414a4b;">0</div><div class="t" style="right:250.20px;top:352.27px;font-size:7.9px;line-height:9.08px;font-weight:400;color:#414a4b;">2</div><div class="t" style="right:205.00px;top:352.27px;font-size:7.9px;line-height:9.08px;font-weight:400;color:#414a4b;">0</div><div class="t" style="right:162.10px;top:352.27px;font-size:7.9px;line-height:9.08px;font-weight:400;color:#414a4b;">0</div><div class="t" style="right:117.30px;top:352.27px;font-size:7.9px;line-height:9.08px;font-weight:400;color:#414a4b;">1</div><div class="t" style="right:72.40px;top:352.27px;font-size:7.9px;line-height:9.08px;font-weight:400;color:#414a4b;">0</div><div class="t" style="left:209.90px;top:378.35px;font-size:7.6px;line-height:8.74px;font-weight:700;color:#364141;">Iced Coffee Season</div><div style="position:absolute;left:196.2px;top:377.0px;width:9px;height:9px;background:#f7c948;border-radius:2px;"></div><div class="t" style="right:680.50px;top:377.15px;font-size:7.6px;line-height:8.74px;font-weight:400;color:#414a4b;letter-spacing:-0.25px;"><span style="display:inline-block;line-height:6.2px;border-bottom:0.7px dotted #c5caca;">N/A</span></div><div class="t" style="right:624.30px;top:377.15px;font-size:7.6px;line-height:8.74px;font-weight:400;color:#414a4b;letter-spacing:-0.25px;"><span style="display:inline-block;line-height:6.2px;border-bottom:0.7px dotted #c5caca;">N/A</span></div><div class="t" style="right:579.40px;top:377.15px;font-size:7.6px;line-height:8.74px;font-weight:400;color:#414a4b;letter-spacing:-0.25px;"><span style="display:inline-block;line-height:6.2px;border-bottom:0.7px dotted #c5caca;">N/A</span></div><div class="t" style="right:529.90px;top:377.15px;font-size:7.6px;line-height:8.74px;font-weight:400;color:#414a4b;letter-spacing:-0.25px;"><span style="display:inline-block;line-height:6.2px;border-bottom:0.7px dotted #c5caca;">N/A</span></div><div class="t" style="right:491.00px;top:377.15px;font-size:7.6px;line-height:8.74px;font-weight:400;color:#414a4b;letter-spacing:-0.25px;"><span style="display:inline-block;line-height:6.2px;border-bottom:0.7px dotted #c5caca;">N/A</span></div><div class="t" style="right:446.00px;top:377.15px;font-size:7.6px;line-height:8.74px;font-weight:400;color:#414a4b;letter-spacing:-0.25px;"><span style="display:inline-block;line-height:6.2px;border-bottom:0.7px dotted #c5caca;">N/A</span></div><div class="t" style="right:391.80px;top:377.15px;font-size:7.6px;line-height:8.74px;font-weight:400;color:#414a4b;letter-spacing:-0.25px;"><span style="display:inline-block;line-height:6.2px;border-bottom:0.7px dotted #c5caca;">N/A</span></div><div class="t" style="right:341.00px;top:377.15px;font-size:7.6px;line-height:8.74px;font-weight:400;color:#414a4b;letter-spacing:-0.25px;"><span style="display:inline-block;line-height:6.2px;border-bottom:0.7px dotted #c5caca;">N/A</span></div><div class="t" style="right:295.80px;top:377.15px;font-size:7.6px;line-height:8.74px;font-weight:400;color:#414a4b;letter-spacing:-0.25px;"><span style="display:inline-block;line-height:6.2px;border-bottom:0.7px dotted #c5caca;">N/A</span></div><div class="t" style="right:250.20px;top:377.15px;font-size:7.6px;line-height:8.74px;font-weight:400;color:#414a4b;letter-spacing:-0.25px;"><span style="display:inline-block;line-height:6.2px;border-bottom:0.7px dotted #c5caca;">N/A</span></div><div class="t" style="right:205.00px;top:377.15px;font-size:7.6px;line-height:8.74px;font-weight:400;color:#414a4b;letter-spacing:-0.25px;"><span style="display:inline-block;line-height:6.2px;border-bottom:0.7px dotted #c5caca;">N/A</span></div><div class="t" style="right:162.10px;top:377.15px;font-size:7.6px;line-height:8.74px;font-weight:400;color:#414a4b;letter-spacing:-0.25px;"><span style="display:inline-block;line-height:6.2px;border-bottom:0.7px dotted #c5caca;">N/A</span></div><div class="t" style="right:117.30px;top:377.15px;font-size:7.6px;line-height:8.74px;font-weight:400;color:#414a4b;letter-spacing:-0.25px;"><span style="display:inline-block;line-height:6.2px;border-bottom:0.7px dotted #c5caca;">N/A</span></div><div class="t" style="right:72.40px;top:377.15px;font-size:7.6px;line-height:8.74px;font-weight:400;color:#414a4b;letter-spacing:-0.25px;"><span style="display:inline-block;line-height:6.2px;border-bottom:0.7px dotted #c5caca;">N/A</span></div><div style="position:absolute;left:175.6px;top:416.8px;width:795.5px;height:160px;background:#ffffff;border-radius:4px;box-shadow:0 0 0 0.5px #e8ebeb;"></div><div class="t" style="left:189.30px;top:427.61px;font-size:9.1px;line-height:10.46px;font-weight:700;color:#364141;">Listening Topic Summary</div><div class="t" style="left:305.30px;top:429.25px;font-size:7.7px;line-height:8.85px;font-weight:400;color:#4b5355;">United States Studies Centre</div><div class="t" style="left:189.30px;top:441.82px;font-size:7.85px;line-height:9.03px;font-weight:400;color:#4b5355;">View key performance metrics for this reporting period to help prioritize what to analyze next.</div><div style="position:absolute;left:176px;top:462px;width:795px;height:1px;background:#eceeee;"></div><div style="position:absolute;left:189.6px;top:467.6px;width:49.4px;height:13.2px;background:#eff1f1;border-radius:3.5px;"></div><div style="position:absolute;left:244.2px;top:467.6px;width:72.8px;height:13.2px;background:#eff1f1;border-radius:3.5px;"></div><svg style="left:190.4px;top:466.4px" width="16" height="14" viewBox="0 0 16 14" fill="#4d5555"><rect x="3.8" y="5.6" width="1.1" height="4.2" rx="0.3"/><rect x="6.9" y="4.6" width="1.1" height="6.2" rx="0.3"/><rect x="4.5" y="7.2" width="2.6" height="0.9"/><path d="M8.2 5.8 L11 7.7 L8.2 9.6Z"/></svg><div class="t" style="left:205.50px;top:471.15px;font-size:6.4px;line-height:7.36px;font-weight:700;color:#4b5355;">Listening</div><svg style="left:248.5px;top:470.3px" width="7" height="7.5" viewBox="0 0 7 7.5"><rect x="0.3" y="0.9" width="6.4" height="6.3" rx="0.9" fill="#4d5555"/><rect x="1" y="2.6" width="5" height="0.5" fill="#9aa1a1"/><rect x="1.4" y="0.1" width="1" height="1.6" rx="0.3" fill="#4d5555"/><rect x="4.6" y="0.1" width="1" height="1.6" rx="0.3" fill="#4d5555"/></svg><div class="t" style="left:259.50px;top:471.15px;font-size:6.4px;line-height:7.36px;font-weight:700;color:#4b5355;">Reporting Period</div><div style="position:absolute;left:176px;top:485px;width:795px;height:1px;background:#eceeee;"></div><div style="position:absolute;left:441px;top:486px;width:1px;height:80px;background:#f0f2f2;"></div><div style="position:absolute;left:705.5px;top:486px;width:1px;height:80px;background:#f0f2f2;"></div><div style="position:absolute;left:176px;top:549px;width:265px;height:1px;background:#f3f5f5;"></div><div class="t" style="left:190.80px;top:503.05px;font-size:7.7px;line-height:8.85px;font-weight:400;color:#ccd1d1;"><span style="display:inline-block;line-height:7.6px;border-bottom:0.6px solid #f1f3f3;">Total Volume</span></div><div class="t" style="left:190.80px;top:519.11px;font-size:14.2px;line-height:16.33px;font-weight:400;color:#d3d8d8;">0</div><div class="t" style="left:456.00px;top:503.05px;font-size:7.7px;line-height:8.85px;font-weight:400;color:#ccd1d1;"><span style="display:inline-block;line-height:7.6px;border-bottom:0.6px solid #f1f3f3;">Total Engagements</span></div><div style="position:absolute;left:455.7px;top:523px;width:7px;height:0.9px;background:#dde1e1;"></div><div class="t" style="left:719.90px;top:503.05px;font-size:7.7px;line-height:8.85px;font-weight:400;color:#ccd1d1;"><span style="display:inline-block;line-height:7.6px;border-bottom:0.6px solid #f1f3f3;">Average Engagements</span></div><div style="position:absolute;left:719.6px;top:523px;width:7px;height:0.9px;background:#dde1e1;"></div><svg style="left:559px;top:515px" width="30" height="23" viewBox="0 0 30 23">
<circle cx="20.5" cy="3.6" r="1.15" fill="#5b9ae6"/>
<path d="M26 9.4 V14.2 M23.6 11.8 H28.4" stroke="#5b9ae6" stroke-width="1" stroke-linecap="round"/>
<path d="M8.2 9.5 L14.6 11.8 C16.2 12.3 17 13.4 17 15 V18.8 C17 20.3 16 21.2 14.6 21.2 H10.4 L4.5 16.5 L8.2 15Z" fill="#5b9ae6"/>
<path d="M5.6 14.2 V6 C5.6 4.4 9.4 4.4 9.4 6 V10.6 L13.4 11.6 C14.9 12 15.9 13.1 15.9 14.6 V18.2 C15.9 19.4 15 20.3 13.8 20.3 H9.6 L3 16.2 C1.6 15.2 2.4 13.2 4.1 13.7 L5.6 14.2Z" fill="none" stroke="#2c3535" stroke-width="1.05" stroke-linejoin="round"/>
</svg><div class="t" style="left:273.50px;width:600px;text-align:center;top:551.83px;font-size:7.4px;line-height:8.51px;font-weight:700;color:#2c3535;">No data found</div><div style="position:absolute;left:991.4px;top:3.7px;width:28.6px;height:28.6px;border-radius:50%;background:#3b78c4;"></div><svg style="left:1001.3px;top:12.6px" width="10" height="10" viewBox="0 0 10 10" fill="none" stroke="#ffffff" stroke-width="0.9" stroke-linecap="round" stroke-linejoin="round"><path d="M4.5 1.5 H2 C1.4 1.5 1 1.9 1 2.5 V8 C1 8.6 1.4 9 2 9 H7.5 C8.1 9 8.5 8.6 8.5 8 V5.5"/><path d="M4 6 L4.3 4.6 L8 0.9 L9.1 2 L5.4 5.7Z"/></svg><svg style="left:1001.55px;top:50.55px" width="9.5" height="9.5" viewBox="0 0 10 10" fill="none" stroke="#4b5355" stroke-width="1" stroke-linecap="round" stroke-linejoin="round"><path d="M4.1 1.4 C4.9 0.2 5.1 0.2 5.9 1.4 L9.3 7.4 C9.9 8.5 9.6 9.2 8.4 9.2 H1.6 C0.4 9.2 0.1 8.5 0.7 7.4Z"/><path d="M5 3.6 V5.8"/><circle cx="5" cy="7.3" r="0.35" fill="#4b5355"/></svg><div style="position:absolute;left:1011.7px;top:49.4px;width:4.8px;height:4.8px;background:#e0474c;border-radius:50%;"></div><svg style="left:1001.55px;top:80.75px" width="9.5" height="9.5" viewBox="0 0 10 10" fill="none" stroke="#4b5355" stroke-width="1" stroke-linecap="round" stroke-linejoin="round"><path d="M1.6 0.8 H8.4 C8.9 0.8 9.2 1.1 9.2 1.6 V6.6 C9.2 7.1 8.9 7.4 8.4 7.4 H3.2 L0.8 9.2 V1.6 C0.8 1.1 1.1 0.8 1.6 0.8Z"/><path d="M5.4 2.2 L3.9 4.3 H6.1 L4.6 6"/></svg><svg style="left:1001.55px;top:111.85px" width="9.5" height="9.5" viewBox="0 0 10 10" fill="none" stroke="#4b5355" stroke-width="1" stroke-linecap="round" stroke-linejoin="round"><path d="M4 6 L6 4"/><path d="M5.2 2.6 L6.4 1.4 C7.1 0.7 8.3 0.7 8.9 1.4 C9.6 2.1 9.6 3.2 8.9 3.9 L7.7 5.1"/><path d="M4.8 7.4 L3.6 8.6 C2.9 9.3 1.7 9.3 1.1 8.6 C0.4 7.9 0.4 6.8 1.1 6.1 L2.3 4.9"/></svg><svg style="left:1001.80px;top:143.10px" width="9" height="9" viewBox="0 0 10 10" fill="none" stroke="#4b5355" stroke-width="1" stroke-linecap="round" stroke-linejoin="round"><rect x="1" y="1" width="3.2" height="3.2" rx="0.9"/><rect x="5.8" y="1" width="3.2" height="3.2" rx="0.9"/><rect x="1" y="5.8" width="3.2" height="3.2" rx="0.9"/><rect x="5.8" y="5.8" width="3.2" height="3.2" rx="0.9"/></svg><svg style="left:1002.05px;top:174.25px" width="8.5" height="8.5" viewBox="0 0 10 10" fill="none" stroke="#4b5355" stroke-width="1" stroke-linecap="round" stroke-linejoin="round"><path d="M2 1 H8 C8.6 1 9 1.4 9 2 V6.6 L6.6 9 H2 C1.4 9 1 8.6 1 8 V2 C1 1.4 1.4 1 2 1Z"/><path d="M5 3.2 V6.6 M3.3 4.9 H6.7"/></svg><svg style="left:1001.8px;top:204.6px" width="9" height="9" viewBox="0 0 10 10"><rect x="0.4" y="1.6" width="9.2" height="7" rx="0.8" fill="#858c8d"/><rect x="1.4" y="2.6" width="7.2" height="5" rx="0.3" fill="#aeb4b5"/><rect x="1.8" y="3" width="1.4" height="1.4" fill="#f4f5f5"/><rect x="3.8" y="3" width="1.4" height="1.4" fill="#f4f5f5"/><rect x="5.8" y="3" width="1.4" height="1.4" fill="#f4f5f5"/><rect x="2.6" y="5.6" width="4.8" height="1.2" fill="#f4f5f5"/></svg><svg style="left:1001.50px;top:235.00px" width="9" height="9" viewBox="0 0 10 10" fill="none" stroke="#4b5355" stroke-width="1" stroke-linecap="round" stroke-linejoin="round"><circle cx="5" cy="5" r="4.2"/><path d="M3.7 3.9 C3.7 3.1 4.3 2.7 5 2.7 C5.7 2.7 6.3 3.1 6.3 3.9 C6.3 4.8 5 4.9 5 5.9"/><circle cx="5" cy="7.4" r="0.35" fill="#4b5355"/></svg><div style="position:absolute;left:1012.2px;top:232.2px;width:4.8px;height:4.8px;background:#5446d6;border-radius:50%;"></div></body></html>
